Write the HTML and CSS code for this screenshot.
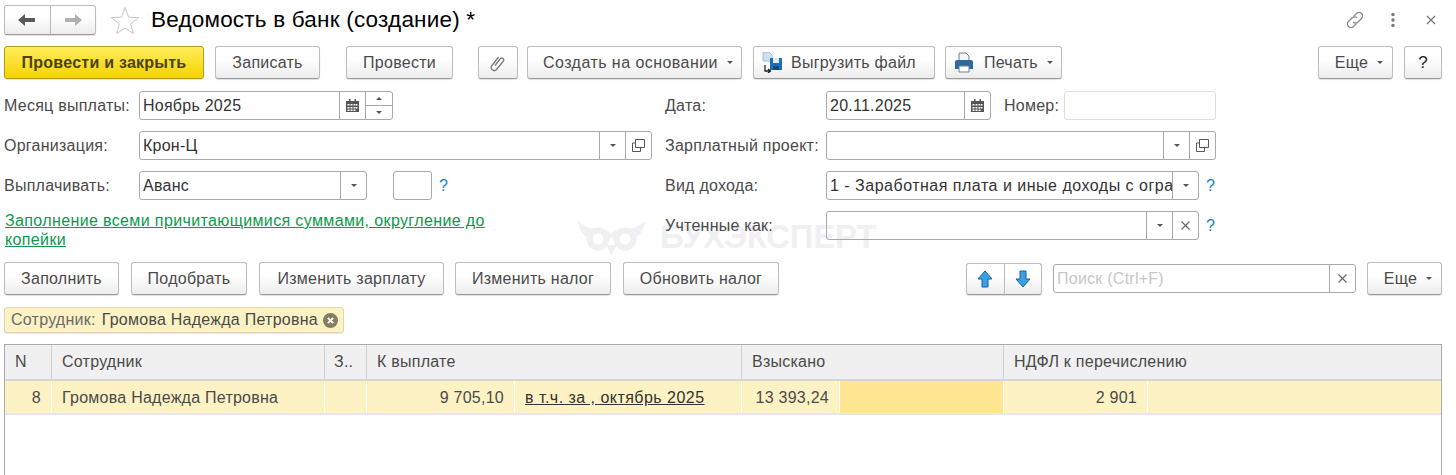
FILE: index.html
```html
<!DOCTYPE html>
<html lang="ru">
<head>
    <meta charset="UTF-8">
    <title>Ведомость в банк (создание)</title>
    <link rel="stylesheet" href="styles.css">
</head>
<body>
    <header class="title-bar">
        <div class="btn-group nav-group">
            <button class="btn nav-btn">
                <svg width="20" height="14" viewBox="0 0 20 14"><path d="M1 7l7-6v4h10v4H8v4z" fill="#595959"/></svg>
            </button>
            <button class="btn nav-btn">
                <svg width="20" height="14" viewBox="0 0 20 14"><path d="M19 7l-7-6v4H2v4h10v4z" fill="#b0b0b0"/></svg>
            </button>
        </div>
        <svg class="star" width="30" height="29" viewBox="0 0 30 29"><path d="M15 1.500l3.600 9.700 10 .4-7.900 6.300 2.700 9.800L15 22.100l-8.400 5.600 2.700-9.800-7.900-6.300 10-.4z" fill="#fff" stroke="#c3c8cc"/></svg>
        <h1>Ведомость в банк (создание) *</h1>
        <div class="window-tools">
            <svg class="tool-link" width="20" height="20" viewBox="0 0 20 20" fill="none" stroke="#8c8c8c" stroke-width="1.300"><path d="M8.500 6.500l3-3a3.500 3.500 0 0 1 5 5l-3.500 3.500a3.500 3.500 0 0 1-5 0"/><path d="M11.500 13.500l-3 3a3.500 3.500 0 0 1-5-5L7 8a3.500 3.500 0 0 1 5 0"/></svg>
            <svg class="tool-more" width="6" height="16" viewBox="0 0 6 16" fill="#777"><circle cx="3" cy="2.500" r="1.700"/><circle cx="3" cy="8" r="1.700"/><circle cx="3" cy="13.500" r="1.700"/></svg>
            <svg class="tool-close" width="10" height="10" viewBox="0 0 10 10" stroke="#777" stroke-width="1.200"><path d="M1 1l8 8M9 1l-8 8"/></svg>
        </div>
    </header>

    <div class="toolbar">
        <button class="btn btn-primary w-post-close">Провести и закрыть</button>
        <button class="btn w-save">Записать</button>
        <button class="btn w-post">Провести</button>
        <button class="btn w-clip">
            <svg width="16" height="18" viewBox="0 0 16 18" fill="none" stroke="#777" stroke-width="1.300"><path d="M5 11.500l5.500-7a2 2 0 0 1 3 2.500l-7 8.500a3 3 0 0 1-4.500-4l6.500-8.500"/></svg>
        </button>
        <button class="btn w-create">Создать на основании<span class="caret"></span></button>
        <button class="btn btn-iconed w-export">
            <svg class="btn-icon" width="21" height="21" viewBox="0 0 21 21">
                <path d="M1 0h6l3 3v6H1z" fill="#cfe0f2" stroke="#8fb0d0" stroke-width=".8"/>
                <path d="M8 6h12v12H8z" fill="#1f6fb5"/>
                <path d="M11 6h6v5h-6z" fill="#dfeaf5"/>
                <path d="M11 18v-4h6v4z" fill="#134a7d"/>
                <path d="M3 13v6h5M6 17l2.500 2-2.500 2" fill="none" stroke="#222" stroke-width="1.300"/>
            </svg>
            Выгрузить файл
        </button>
        <button class="btn btn-iconed w-print">
            <svg class="btn-icon" width="20" height="21" viewBox="0 0 20 21">
                <path d="M5 1h7l3 3v6H5z" fill="#f4f6f8" stroke="#6d7f91"/>
                <path d="M1 10a2 2 0 0 1 2-2h14a2 2 0 0 1 2 2v7H1z" fill="#2f6a9e"/>
                <path d="M5 14h10v6H5z" fill="#fff" stroke="#6d7f91"/>
            </svg>
            Печать<span class="caret"></span>
        </button>
        <button class="btn w-more push-right">Еще<span class="caret"></span></button>
        <button class="btn btn-help">?</button>
    </div>

    <section class="form">
        <div class="form-col form-col-left">
            <div class="form-row">
                <label class="form-label">Месяц выплаты:</label>
                <div class="field w-month">
                    <span class="field-value">Ноябрь 2025</span>
                    <span class="field-btn cal-btn">
                        <svg width="13" height="13" viewBox="0 0 13 13"><path d="M0 2h13v11H0z" fill="#555"/><path d="M3 0h1.500v3H3zM8.500 0H10v3H8.500z" fill="#555"/><path d="M1.500 5h2v1.500h-2zM4.500 5h2v1.500h-2zM7.500 5h2v1.500h-2zM10 5h1.500v1.500H10zM1.500 8h2v1.500h-2zM4.500 8h2v1.500h-2zM7.500 8h2v1.500h-2zM10 8h1.500v1.500H10zM1.500 10.500h2V12h-2zM4.500 10.500h2V12h-2zM7.500 10.500h2V12h-2z" fill="#fff"/></svg>
                    </span>
                    <span class="field-btn spin-btn">
                        <span class="spin-part"><span class="caret-up"></span></span>
                        <span class="spin-part spin-part-low"><span class="caret"></span></span>
                    </span>
                </div>
            </div>
            <div class="form-row">
                <label class="form-label">Организация:</label>
                <div class="field w-org">
                    <span class="field-value">Крон-Ц</span>
                    <span class="field-btn drop-btn"><span class="caret"></span></span>
                    <span class="field-btn open-btn">
                        <svg width="13" height="13" viewBox="0 0 13 13" fill="none" stroke="#555"><path d="M3.500.5h9v8h-9z"/><path d="M3.500 4H.5v8.500h8V9"/></svg>
                    </span>
                </div>
            </div>
            <div class="form-row">
                <label class="form-label">Выплачивать:</label>
                <div class="field w-pay">
                    <span class="field-value">Аванс</span>
                    <span class="field-btn drop-btn"><span class="caret"></span></span>
                </div>
                <div class="field w-check"></div>
                <a class="hint">?</a>
            </div>
            <a class="fill-link">Заполнение всеми причитающимися суммами, округление до копейки</a>
        </div>

        <div class="form-col">
            <div class="form-row">
                <label class="form-label form-label-right">Дата:</label>
                <div class="field w-date">
                    <span class="field-value">20.11.2025</span>
                    <span class="field-btn cal-btn">
                        <svg width="13" height="13" viewBox="0 0 13 13"><path d="M0 2h13v11H0z" fill="#555"/><path d="M3 0h1.500v3H3zM8.500 0H10v3H8.500z" fill="#555"/><path d="M1.500 5h2v1.500h-2zM4.500 5h2v1.500h-2zM7.500 5h2v1.500h-2zM10 5h1.500v1.500H10zM1.500 8h2v1.500h-2zM4.500 8h2v1.500h-2zM7.500 8h2v1.500h-2zM10 8h1.500v1.500H10zM1.500 10.500h2V12h-2zM4.500 10.500h2V12h-2zM7.500 10.500h2V12h-2z" fill="#fff"/></svg>
                    </span>
                </div>
                <label class="form-label number-label">Номер:</label>
                <div class="field field-off w-number"></div>
            </div>
            <div class="form-row">
                <label class="form-label form-label-right">Зарплатный проект:</label>
                <div class="field w-project">
                    <span class="field-value"></span>
                    <span class="field-btn drop-btn"><span class="caret"></span></span>
                    <span class="field-btn open-btn">
                        <svg width="13" height="13" viewBox="0 0 13 13" fill="none" stroke="#555"><path d="M3.500.5h9v8h-9z"/><path d="M3.500 4H.5v8.500h8V9"/></svg>
                    </span>
                </div>
            </div>
            <div class="form-row">
                <label class="form-label form-label-right">Вид дохода:</label>
                <div class="field w-income">
                    <span class="field-value">1 - Заработная плата и иные доходы с ограничением взыскания</span>
                    <span class="field-btn drop-btn"><span class="caret"></span></span>
                </div>
                <a class="hint">?</a>
            </div>
            <div class="form-row">
                <label class="form-label form-label-right">Учтенные как:</label>
                <div class="field w-income">
                    <span class="field-value"></span>
                    <span class="field-btn drop-btn"><span class="caret"></span></span>
                    <span class="field-btn clear-btn">
                        <svg width="9" height="9" viewBox="0 0 9 9" stroke="#666" stroke-width="1.100"><path d="M.5.5l8 8M8.500.5l-8 8"/></svg>
                    </span>
                </div>
                <a class="hint">?</a>
            </div>
        </div>
    </section>

    <div class="toolbar table-toolbar">
        <button class="btn w-fill">Заполнить</button>
        <button class="btn w-pick">Подобрать</button>
        <button class="btn w-salary">Изменить зарплату</button>
        <button class="btn w-tax">Изменить налог</button>
        <button class="btn w-tax-up">Обновить налог</button>
        <div class="btn-group arrows-group push-right">
            <button class="btn nav-btn">
                <svg width="16" height="18" viewBox="0 0 16 18"><path d="M8 1l7 8h-4v8H5V9H1z" fill="#3d9fe3" stroke="#14609e"/></svg>
            </button>
            <button class="btn nav-btn">
                <svg width="16" height="18" viewBox="0 0 16 18"><path d="M8 17l7-8h-4V1H5v8H1z" fill="#3d9fe3" stroke="#14609e"/></svg>
            </button>
        </div>
        <div class="field search">
            <span class="field-value search-text">Поиск (Ctrl+F)</span>
            <span class="field-btn clear-btn">
                <svg width="9" height="9" viewBox="0 0 9 9" stroke="#666" stroke-width="1.100"><path d="M.5.5l8 8M8.500.5l-8 8"/></svg>
            </span>
        </div>
        <button class="btn w-more">Еще<span class="caret"></span></button>
    </div>

    <div class="chip-row">
        <div class="chip">
            <span class="chip-key">Сотрудник:</span>
            <span class="chip-value">Громова Надежда Петровна</span>
            <svg class="chip-x" width="15" height="15" viewBox="0 0 15 15"><circle cx="7.500" cy="7.500" r="7.500" fill="#857c62"/><path d="M4.800 4.800l5.400 5.400M10.200 4.800l-5.400 5.400" stroke="#fff" stroke-width="1.800"/></svg>
        </div>
    </div>

    <div class="table">
        <div class="grid-row grid-head">
            <div class="cell c-n">N</div>
            <div class="cell c-name">Сотрудник</div>
            <div class="cell c-z">З..</div>
            <div class="cell c-pay">К выплате</div>
            <div class="cell c-got">Взыскано</div>
            <div class="cell c-ndfl">НДФЛ к перечислению</div>
        </div>
        <div class="grid-row grid-body">
            <div class="cell c-n num">8</div>
            <div class="cell c-name">Громова Надежда Петровна</div>
            <div class="cell c-z"></div>
            <div class="cell c-pay-a num">9 705,10</div>
            <div class="cell c-pay-b"><a class="row-link">в т.ч. за , октябрь 2025</a></div>
            <div class="cell c-got-a num">13 393,24</div>
            <div class="cell c-got-b cell-mark"></div>
            <div class="cell c-ndfl-a num">2 901</div>
            <div class="cell c-ndfl-b"></div>
        </div>
    </div>

    <div class="watermark">
        <svg width="67" height="34" viewBox="0 0 67 34"><path d="M0 0c6 6 14 8 21 8 6 0 10 2 12.500 5C36 10 40 8 46 8c7 0 15-2 21-8-1 9-5 14-10 17H10C5 14 1 9 0 0z" fill="currentColor"/><path d="M28 24h11l-5.500 10z" fill="currentColor"/><circle cx="20" cy="18" r="8.500" fill="#fff" stroke="#fff" stroke-width="6"/><circle cx="47" cy="18" r="8.500" fill="#fff" stroke="#fff" stroke-width="6"/><circle cx="20" cy="18" r="8.500" fill="none" stroke="currentColor" stroke-width="6"/><circle cx="47" cy="18" r="8.500" fill="none" stroke="currentColor" stroke-width="6"/></svg>
        <span>БУХЭКСПЕРТ</span>
    </div>
</body>
</html>
```

FILE: styles.css
```css
:root {
  --text: #4a4a4a;
  --dark: #2b2b2b;
  --line: #a9a9a9;
  --row: #fdf2c4;
}

* {
  box-sizing: border-box;
}

html, body {
  height: 475px;
  overflow: hidden;
}

body {
  margin: 0;
  padding: 5px 14px 0 4px;
  position: relative;
  background: #fff;
  color: var(--text);
  font-family: "Liberation Sans", Arial, sans-serif;
  font-size: 16px;
  letter-spacing: 0.25px;
}

/* title */
.title-bar {
  display: flex;
  align-items: center;
  height: 30px;
}

h1 {
  margin: 0 0 0 11px;
  font-size: 22.5px;
  font-weight: normal;
  letter-spacing: 0.2px;
  color: #000;
  white-space: nowrap;
}

.star {
  margin-left: 14px;
}

.window-tools {
  margin-left: auto;
  display: flex;
  align-items: center;
}

.tool-more {
  margin-left: 25px;
}

.tool-close {
  margin-left: 30px;
  margin-right: 6px;
}

/* buttons */
.btn {
  display: flex;
  align-items: center;
  justify-content: center;
  flex: none;
  height: 33px;
  padding: 0;
  border: 1px solid #bdbdbd;
  border-bottom-color: #9a9a9a;
  border-radius: 3px;
  background: linear-gradient(#fff, #fff 40%, #ececec);
  box-shadow: 0 1px 1px rgba(0, 0, 0, 0.12);
  color: var(--text);
  font: inherit;
  letter-spacing: inherit;
  white-space: nowrap;
}

.btn-primary {
  border-color: #b39c17;
  background: linear-gradient(#ffec5c, #f6d400);
  color: #4a4215;
  font-weight: bold;
}

.btn-help {
  width: 38px;
  margin-left: 11px;
  color: #222;
  font-size: 17px;
}

.btn-iconed {
  justify-content: flex-start;
  padding-left: 8px;
}

.btn-icon {
  margin-right: 8px;
}

.w-print .btn-icon {
  margin-right: 10px;
}

.btn-group {
  display: flex;
  flex: none;
}

.nav-btn {
  flex: 1;
  height: 30px;
  border-radius: 3px 0 0 3px;
}

.nav-btn + .nav-btn {
  margin-left: -1px;
  border-radius: 0 3px 3px 0;
}

.nav-group {
  width: 92px;
}

.arrows-group {
  width: 76px;
}

.arrows-group .nav-btn {
  height: 32px;
}

.caret {
  display: inline-block;
  width: 0;
  height: 0;
  margin-left: 9px;
  border: 3px solid transparent;
  border-top: 3px solid #555;
  border-bottom: 0;
}

.caret-up {
  display: inline-block;
  border: 3px solid transparent;
  border-bottom: 3px solid #555;
  border-top: 0;
}

.toolbar {
  display: flex;
  align-items: center;
  margin-top: 11px;
}

.push-right {
  margin-left: auto;
}

.w-post-close { width: 200px; }
.w-save { width: 105px; margin-left: 11px; }
.w-post { width: 107px; margin-left: 26px; }
.w-clip { width: 40px; margin-left: 25px; }
.w-create { width: 215px; margin-left: 9px; padding-left: 7px; letter-spacing: 0.45px; }
.w-export { width: 182px; margin-left: 11px; }
.w-print { width: 117px; margin-left: 10px; }
.w-more { width: 75px; padding-left: 7px; }

.w-fill { width: 115px; }
.w-pick { width: 116px; margin-left: 12px; }
.w-salary { width: 185px; margin-left: 12px; }
.w-tax { width: 156px; margin-left: 11px; }
.w-tax-up { width: 156px; margin-left: 12px; }

/* form */
.form {
  display: flex;
  margin-top: 12px;
}

.form-col-left {
  width: 661px;
  flex: none;
}

.form-row {
  display: flex;
  align-items: center;
  height: 29px;
  margin-bottom: 11px;
}

.form-label {
  width: 135px;
  flex: none;
  white-space: nowrap;
}

.form-label-right {
  width: 161px;
}

.number-label {
  width: 60px;
  margin-left: 13px;
}

.field {
  display: flex;
  flex: none;
  height: 29px;
  border: 1px solid var(--line);
  border-radius: 3px;
  color: #333;
}

.field-off {
  border-color: #dedede;
}

.field-value {
  flex: 1;
  min-width: 0;
  padding: 0 3px;
  overflow: hidden;
  white-space: nowrap;
  line-height: 27px;
}

.w-income .field-value {
  letter-spacing: 0.5px;
}

.field-btn {
  display: flex;
  flex: none;
  align-items: center;
  justify-content: center;
  border-left: 1px solid var(--line);
}

.field-btn .caret {
  margin-left: 0;
}

.cal-btn { width: 26px; }
.drop-btn { width: 26px; }
.open-btn { width: 26px; }
.clear-btn { width: 26px; }

.spin-btn {
  flex-direction: column;
  width: 27px;
}

.spin-part {
  display: flex;
  flex: 1;
  align-items: center;
  justify-content: center;
  width: 100%;
}

.spin-part-low {
  border-top: 1px solid var(--line);
}

.w-month { width: 254px; }
.w-org { width: 513px; }
.w-pay { width: 228px; }
.w-check { width: 39px; margin-left: 26px; }
.w-date { width: 165px; }
.w-number { width: 152px; }
.w-project { width: 390px; }
.w-income { width: 373px; }

.hint {
  margin-left: 7px;
  color: #1a7fc4;
  font-size: 16px;
}

.fill-link {
  display: block;
  width: 490px;
  margin-left: 1px;
  color: #0a9a4a;
  letter-spacing: 0.37px;
  line-height: 19px;
  text-decoration: underline;
}

/* list commands */
.table-toolbar {
  margin-top: 11px;
}

.search {
  width: 303px;
  margin-left: 11px;
}

.search-text {
  color: #c6c6c6;
}

.table-toolbar .w-more {
  margin-left: 11px;
}

.chip-row {
  display: flex;
  margin-top: 12px;
}

.chip {
  display: flex;
  align-items: center;
  width: 340px;
  height: 26px;
  padding-left: 6px;
  border: 1px solid #e0d6ae;
  border-radius: 3px;
  background: #fdf2c4;
  box-shadow: 0 1px 1px rgba(0, 0, 0, 0.1);
  white-space: nowrap;
}

.chip-key {
  color: #6a6a6a;
}

.chip-value {
  margin-left: 6px;
}

.chip-x {
  margin-left: 5px;
}

/* table */
.table {
  height: 135px;
  margin-top: 11px;
  border: 1px solid var(--line);
  border-bottom: 0;
}

.grid-row {
  display: grid;
  grid-template-columns: 47px 273px 42px 148px 227px 98px 164px 144px 1fr;
}

.grid-head {
  height: 36px;
  border-bottom: 2px solid #d5d5d5;
  background: #f0f0f0;
}

.grid-body {
  height: 34px;
  border-bottom: 2px solid #e6e6ec;
  background: var(--row);
}

.cell {
  padding: 0 10px;
  overflow: hidden;
  border-right: 1px solid #fff;
  white-space: nowrap;
  line-height: 33px;
}

.grid-head .cell {
  border-right-color: #d0d0d0;
  line-height: 34px;
}

.grid-head .cell:last-child,
.grid-body .cell:last-child {
  border-right: 0;
}

.c-z { padding: 0 9px; }
.c-pay { grid-column: span 2; }
.c-got { grid-column: span 2; }
.c-ndfl { grid-column: span 2; }

.num {
  text-align: right;
}

.cell-mark {
  background: #fee591;
}

.row-link {
  color: #333;
  letter-spacing: 0.47px;
  text-decoration: underline;
}

.watermark {
  position: absolute;
  top: 221px;
  left: 578px;
  display: flex;
  align-items: flex-start;
  color: #f0f0f2;
  font-size: 33px;
  font-weight: bold;
  letter-spacing: -0.3px;
  line-height: 32px;
  z-index: -1;
}

.watermark span {
  margin-left: 15px;
}
```
